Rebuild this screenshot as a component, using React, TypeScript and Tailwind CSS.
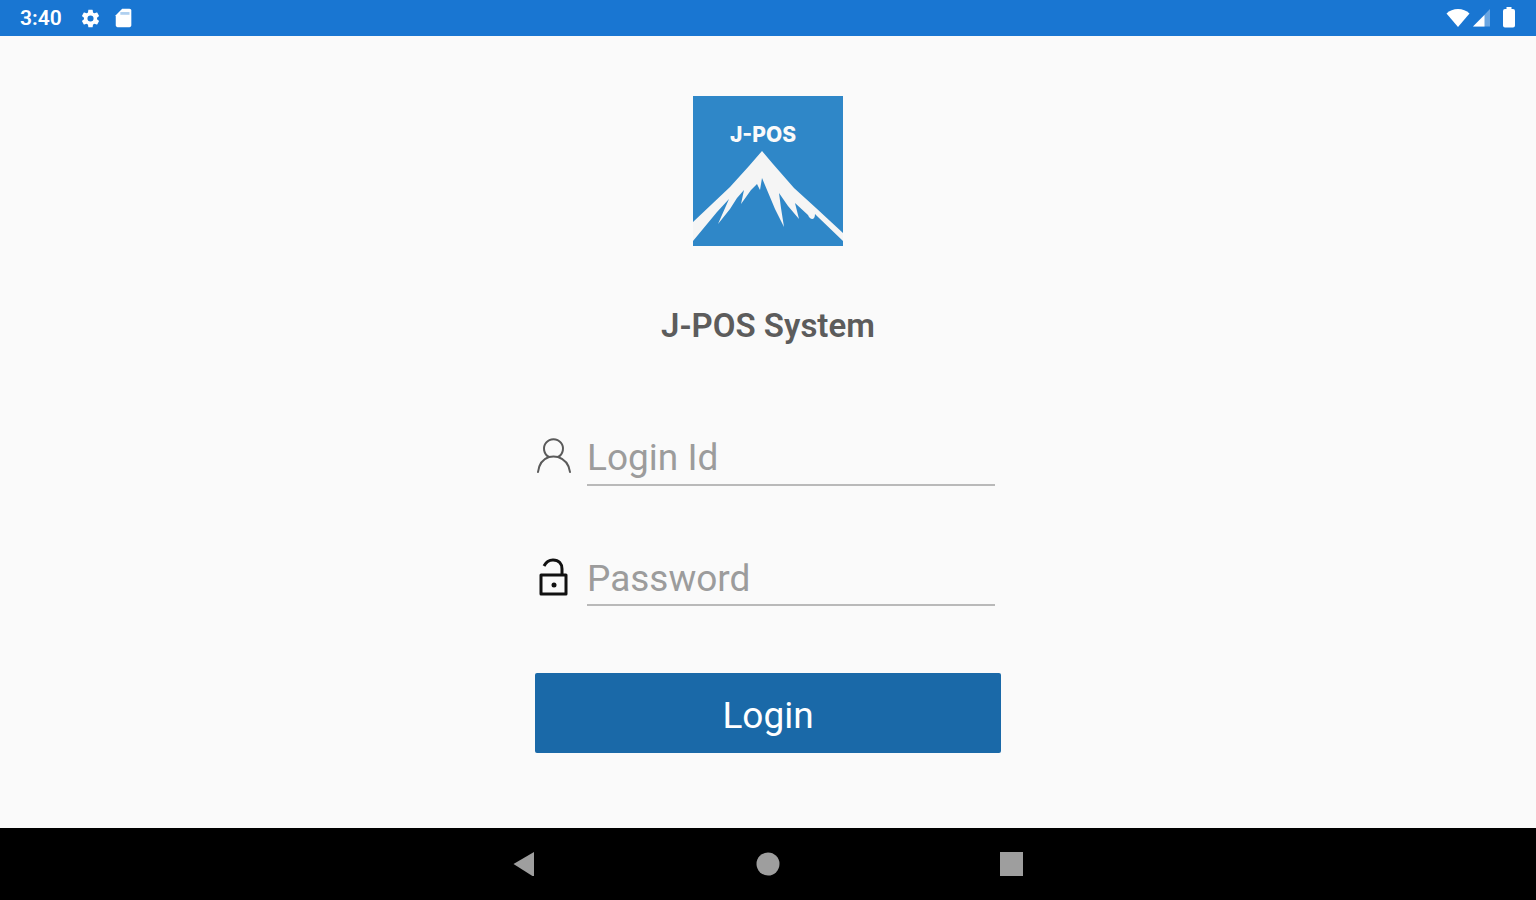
import { useState } from "react";

function StatusBar() {
    return (
        <header className="flex h-9 items-center justify-between bg-[#1976d2] px-5 text-white">
            <div className="flex items-center">
                <span className="w-[60px] text-[21px] leading-6 font-semibold">3:40</span>
                <svg className="size-[21px]" viewBox="0 0 24 24" fill="currentColor" aria-hidden="true">
                    <path d="M19.43 12.98c.04-.32.07-.64.07-.98s-.03-.66-.07-.98l2.11-1.65c.19-.15.24-.42.12-.64l-2-3.46c-.12-.22-.39-.3-.61-.22l-2.49 1c-.52-.4-1.08-.73-1.69-.98l-.38-2.65A.49.49 0 0 0 14 2h-4c-.25 0-.46.18-.49.42l-.38 2.65c-.61.25-1.17.59-1.69.98l-2.49-1c-.23-.09-.49 0-.61.22l-2 3.46c-.13.22-.07.49.12.64l2.11 1.65c-.04.32-.07.65-.07.98s.03.66.07.98l-2.11 1.65c-.19.15-.24.42-.12.64l2 3.46c.12.22.39.3.61.22l2.49-1c.52.4 1.08.73 1.69.98l.38 2.65c.03.24.24.42.49.42h4c.25 0 .46-.18.49-.42l.38-2.65c.61-.25 1.17-.59 1.69-.98l2.49 1c.23.09.49 0 .61-.22l2-3.46c.12-.22.07-.49-.12-.64l-2.11-1.65zM12 15.5a3.5 3.5 0 1 1 0-7 3.5 3.5 0 0 1 0 7z" />
                </svg>
                <svg className="ml-3 size-[22px]" viewBox="0 0 24 24" fill="currentColor" aria-hidden="true">
                    <path d="M18 2h-8L3 9v11c0 1.100.9 2 2 2h13c1.100 0 2-.9 2-2V4c0-1.100-.9-2-2-2z" />
                    <path d="M8 7h10" stroke="#1976d2" strokeOpacity="0.35" strokeWidth="3" />
                </svg>
            </div>
            <div className="flex items-center">
                <svg className="h-5 w-6" viewBox="0 0 24 20" fill="currentColor" aria-hidden="true">
                    <path d="M12 19 0.500 5.500C3.500 2.500 7.500 1 12 1S20.500 2.500 23.500 5.500z" />
                </svg>
                <svg className="ml-0.5 h-5 w-5" viewBox="0 0 20 20" fill="currentColor" aria-hidden="true">
                    <path d="M1 18.500 18 1v17.500z" opacity="0.35" />
                    <path d="M1 18.500 12.500 7V18.500z" />
                </svg>
                <svg className="ml-2 h-[22px] w-4" viewBox="0 0 16 22" fill="currentColor" aria-hidden="true">
                    <path d="M6.500 0h5v2H13A2 2 0 0 1 15 4V18.500a2 2 0 0 1-2 2H5a2 2 0 0 1-2-2V4a2 2 0 0 1 2-2h1.500z" />
                </svg>
            </div>
        </header>
    );
}

function Logo() {
    return (
        <svg className="size-[150px]" viewBox="0 0 150 150" role="img" aria-label="J-POS">
            <rect width="150" height="150" fill="#2f87c8" />
            <text
                x="70"
                y="46"
                textAnchor="middle"
                fill="#fafafa"
                className="font-['Inter',sans-serif] text-[21px] font-extrabold"
            >
                J-POS
            </text>
            <path
                fill="#f5f5f5"
                d="M69 55 80 68 101 92 123 112 150 137V145L125 121 122 118C122 125 117 124 115 119L102 107 106 123 95 110 86 97 88 112 91 131 82 113 69 82 67 94 64 88 58 94 48 108 51 94 44 102 37 113 25 128 36 103 24 116 0 145V126L37 91 56 70z"
            />
        </svg>
    );
}

export default function App() {
    const [loginId, setLoginId] = useState("");
    const [password, setPassword] = useState("");

    return (
        <div className="flex min-h-screen flex-col bg-[#fafafa] font-['Roboto',sans-serif]">
            <StatusBar />

            <main className="flex flex-1 flex-col items-center pt-[60px]">
                <Logo />
                <h1 className="mt-[60px] text-[33px] leading-10 font-semibold text-[#5c5c5c]">J-POS System</h1>

                <form
                    className="mt-20 flex w-full max-w-[466px] flex-col"
                    onSubmit={(e) => e.preventDefault()}
                >
                    <div className="flex items-center pr-1.5">
                        <label htmlFor="login-id" aria-label="Login Id" className="w-[52px] shrink-0">
                            <svg
                                className="size-10"
                                viewBox="0 0 40 40"
                                fill="none"
                                stroke="#5a5a5a"
                                strokeWidth="2"
                                strokeLinecap="round"
                            >
                                <path d="M14 21A9.500 9.500 0 1 1 23 21" />
                                <path d="M3 36C4 28 8 23 14 21Q18.500 20 23 21C29 23 34 28 35 36" />
                            </svg>
                        </label>
                        <input
                            id="login-id"
                            type="text"
                            placeholder="Login Id"
                            value={loginId}
                            onChange={(e) => setLoginId(e.target.value)}
                            className="h-[60px] min-w-0 flex-1 border-b-2 border-[#b9b9b9] bg-transparent pt-1 text-[37px] text-[#333333] outline-none placeholder:text-[#9c9c9c]"
                        />
                    </div>

                    <div className="mt-[60px] flex items-center pr-1.5">
                        <label htmlFor="password" aria-label="Password" className="w-[52px] shrink-0">
                            <svg
                                className="size-10"
                                viewBox="0 0 40 40"
                                fill="none"
                                stroke="#111111"
                                strokeWidth="3"
                            >
                                <path d="M6 19H31V38H6z" strokeLinejoin="round" />
                                <path d="M9 10C11 6 14 4 18 4c6 0 9 4 9 9v6" />
                                <circle cx="19" cy="29" r="2.500" fill="#111111" stroke="none" />
                            </svg>
                        </label>
                        <input
                            id="password"
                            type="password"
                            placeholder="Password"
                            value={password}
                            onChange={(e) => setPassword(e.target.value)}
                            className="h-[60px] min-w-0 flex-1 border-b-2 border-[#b9b9b9] bg-transparent pt-1.5 text-[37px] text-[#333333] outline-none placeholder:text-[#9c9c9c]"
                        />
                    </div>

                    <button
                        type="submit"
                        className="mt-[67px] h-20 rounded-xs bg-[#1a69a8] pt-1.5 text-[37px] text-white"
                    >
                        Login
                    </button>
                </form>
            </main>

            <nav className="flex h-[72px] items-center justify-center gap-[220px] bg-black text-[#9e9e9e]">
                <button type="button" aria-label="Back">
                    <svg className="size-6" viewBox="0 0 24 24" fill="currentColor">
                        <path d="M1.500 12 22 0v25z" />
                    </svg>
                </button>
                <button type="button" aria-label="Home">
                    <svg className="size-6" viewBox="0 0 24 24" fill="currentColor">
                        <circle cx="12" cy="12" r="11.500" />
                    </svg>
                </button>
                <button type="button" aria-label="Recents">
                    <svg className="size-6" viewBox="0 0 24 24" fill="currentColor">
                        <path d="M0 0h23v24H0z" />
                    </svg>
                </button>
            </nav>
        </div>
    );
}
